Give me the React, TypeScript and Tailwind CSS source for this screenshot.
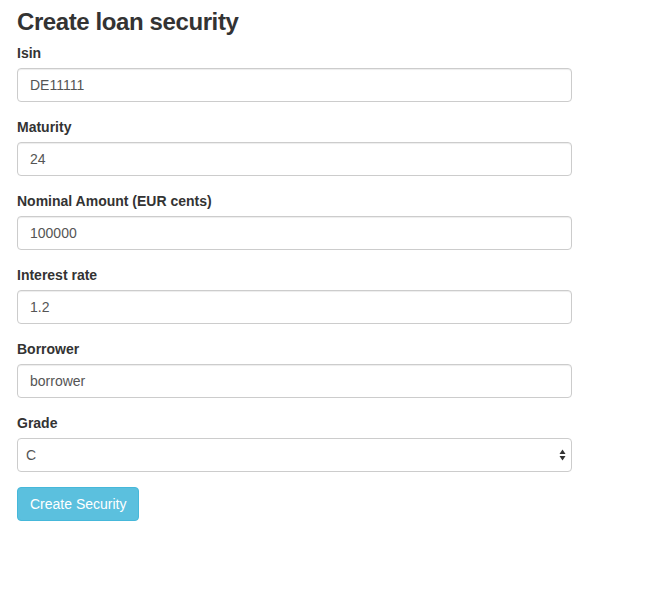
import React, { useState } from "react";

const fields = [
  { label: "Isin", value: "DE11111" },
  { label: "Maturity", value: "24" },
  { label: "Nominal Amount (EUR cents)", value: "100000" },
  { label: "Interest rate", value: "1.2" },
  { label: "Borrower", value: "borrower" },
];

export default function App() {
  const [values, setValues] = useState(fields.map((f) => f.value));
  const [grade, setGrade] = useState("C");

  return (
    <div className="min-h-[592px] bg-white px-[17px] pt-[9px] font-['Liberation_Sans',Arial,sans-serif] text-[14px] leading-[20px] text-[#333]">
      <h3 className="mb-[8px] text-[24px] font-bold leading-[26px] tracking-[-0.4px]">Create loan security</h3>
      <form className="w-[555px]" onSubmit={(e) => e.preventDefault()}>
        {fields.map((f, i) => (
          <div key={f.label} className="mb-[15px]">
            <label className="mb-[5px] block font-bold">{f.label}</label>
            <input
              className="block h-[34px] w-full rounded-[4px] border border-[#ccc] px-[12px] text-[14px] text-[#555] shadow-[inset_0_1px_1px_rgba(0,0,0,0.075)] outline-none"
              value={values[i]}
              onChange={(e) => setValues(values.map((v, j) => (j === i ? e.target.value : v)))}
            />
          </div>
        ))}
        <div className="mb-[15px]">
          <label className="mb-[5px] block font-bold">Grade</label>
          <div className="relative">
            <select
              className="block h-[34px] w-full appearance-none rounded-[4px] border border-[#ccc] bg-white px-[8px] text-[14px] text-[#555] outline-none"
              value={grade}
              onChange={(e) => setGrade(e.target.value)}
            >
              <option>A</option>
              <option>B</option>
              <option>C</option>
              <option>D</option>
            </select>
            <svg className="pointer-events-none absolute right-[6px] top-[11px]" width="7" height="12" viewBox="0 0 7 12">
              <path d="M3.5 0.5 L6.5 5 L0.5 5 Z" fill="#333" />
              <path d="M3.5 11.5 L6.5 7 L0.5 7 Z" fill="#333" />
            </svg>
          </div>
        </div>
        <button
          type="submit"
          className="h-[34px] rounded-[4px] border border-[#46b8da] bg-[#5bc0de] px-[12px] text-[14px] text-white"
        >
          Create Security
        </button>
      </form>
    </div>
  );
}
